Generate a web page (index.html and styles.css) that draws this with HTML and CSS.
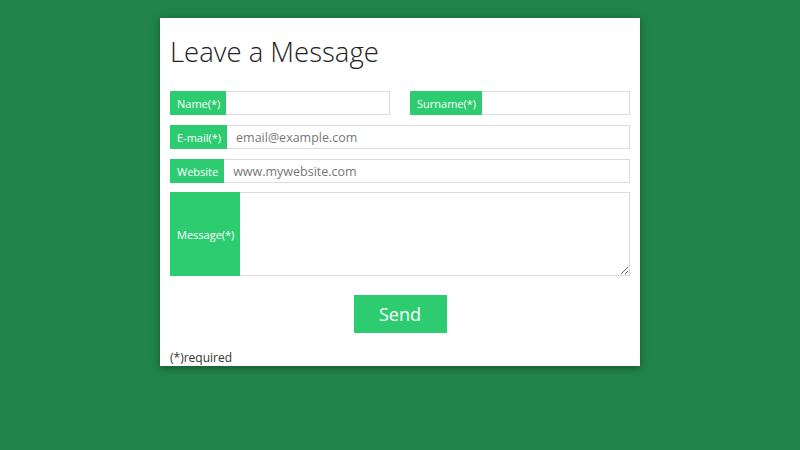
FILE: index.html
```html
<!DOCTYPE html>
<html lang="en">
<head>
<meta charset="utf-8">
<title>Leave a Message</title>
<link rel="stylesheet" href="styles.css">
</head>
<body>
<form class="card">
  <h1 class="title">Leave a Message</h1>
  <div class="row two">
    <label class="group"><span class="tag">Name(*)</span><input class="field" type="text"></label>
    <label class="group"><span class="tag">Surname(*)</span><input class="field" type="text"></label>
  </div>
  <div class="row">
    <label class="group"><span class="tag">E-mail(*)</span><input class="field" type="text" placeholder="email@example.com"></label>
  </div>
  <div class="row">
    <label class="group"><span class="tag">Website</span><input class="field" type="text" placeholder="www.mywebsite.com"></label>
  </div>
  <div class="row">
    <label class="group tall"><span class="tag">Message(*)</span><textarea class="field area"></textarea></label>
  </div>
  <div class="actions"><button class="send" type="button">Send</button></div>
  <p class="note">(*)required</p>
</form>
</body>
</html>
```
FILE: styles.css
```css
html, body {
  margin: 0;
  padding: 0;
}
body {
  background: #20844a;
  font-family: "Open Sans", "DejaVu Sans", sans-serif;
  color: #333;
  padding-top: 18px;
  height: 450px;
  box-sizing: border-box;
}
.card {
  width: 480px;
  margin: 0 auto;
  background: #fff;
  box-sizing: border-box;
  padding: 10px 10px 0;
  box-shadow: 0 2px 8px rgba(0,0,0,0.35);
  display: flex;
  flex-direction: column;
  height: 348px;
}
.title {
  margin: 8px 0 0;
  font-size: 27.5px;
  font-weight: 300;
  color: #222;
  line-height: 32px;
  height: 55px;
}
.row {
  display: flex;
  margin-bottom: 10px;
}
.row.two {
  gap: 20px;
}
.group {
  flex: 1;
  min-width: 0;
  display: flex;
  height: 24px;
  border: 1px solid #dcdcdc;
  box-sizing: border-box;
}
.group.tall {
  height: 84px;
  margin-top: -1px;
}
.tag {
  background: #2ecc71;
  color: #fff;
  font-size: 11px;
  padding: 0 6px 0 7px;
  margin: -1px 0 -1px -1px;
  white-space: nowrap;
  display: flex;
  align-items: center;
}
.field {
  flex: 1;
  width: 0;
  min-width: 0;
  border: 0;
  outline: 0;
  padding: 0 9px;
  font-family: inherit;
  font-size: 12.5px;
  color: #333;
  background: #fff;
}
.field::placeholder {
  color: #777;
}
.area {
  resize: vertical;
  padding: 6px 8px;
}
.actions {
  display: flex;
  justify-content: center;
  margin-top: 9px;
}
.send {
  width: 93px;
  height: 38px;
  border: 0;
  background: #2ecc71;
  color: #fff;
  font-family: inherit;
  font-size: 18px;
  font-weight: 400;
  cursor: pointer;
}
.note {
  margin: auto 0 0;
  font-size: 12px;
  line-height: 16px;
  color: #333;
}
```
